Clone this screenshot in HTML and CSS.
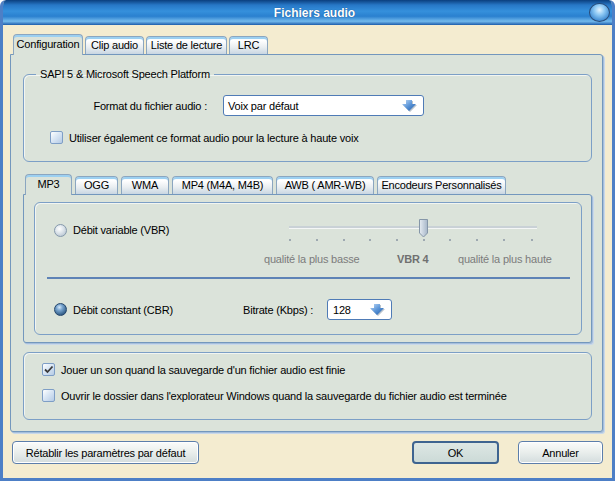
FILE: index.html
```html
<!DOCTYPE html>
<html lang="fr">
  <head>
    <meta charset="UTF-8" />
    <meta name="viewport" content="width=device-width, initial-scale=1.0" />
    <title>Fichiers audio</title>
    <link rel="stylesheet" href="styles.css">
  </head>
  <body>
    <div class="window">
      <!-- Title bar -->
      <div class="titlebar">
        <span class="title">Fichiers audio</span>
        <span class="title-ball"></span>
      </div>

      <div class="client">
        <!-- Main tabs -->
        <div class="tabbar main-tabs">
          <span class="tab active t-config">Configuration</span>
          <span class="tab t-clip">Clip audio</span>
          <span class="tab t-list">Liste de lecture</span>
          <span class="tab t-lrc">LRC</span>
        </div>

        <div class="panel main-panel">
          <fieldset class="group sapi">
            <legend>SAPI 5 &amp; Microsoft Speech Platform</legend>
            <div class="format-row">
              <span class="format-label">Format du fichier audio :</span>
              <div class="select format-select">
                <span>Voix par défaut</span>
                <svg class="arrow" width="18" height="14" viewBox="0 0 18 14">
                  <path d="M6 2H12V6H16L9 13L2 6H6Z" fill="#b9c3cc" />
                  <path d="M5 1H11V5H15L8 12L1 5H5Z" fill="url(#arr)" />
                  <defs>
                    <linearGradient id="arr" x1="0" y1="0" x2="1" y2="1">
                      <stop offset="0" stop-color="#c3dcf6" />
                      <stop offset="0.5" stop-color="#5b95d8" />
                      <stop offset="1" stop-color="#1f5aa8" />
                    </linearGradient>
                  </defs>
                </svg>
              </div>
            </div>
            <label class="check-row">
              <span class="checkbox"></span>
              <span>Utiliser également ce format audio pour la lecture à haute voix</span>
            </label>
          </fieldset>

          <!-- Encoder tabs -->
          <div class="tabbar enc-tabs">
            <span class="tab active t-mp3">MP3</span>
            <span class="tab t-ogg">OGG</span>
            <span class="tab t-wma">WMA</span>
            <span class="tab t-mp4">MP4 (M4A, M4B)</span>
            <span class="tab t-awb">AWB ( AMR-WB)</span>
            <span class="tab t-enc">Encodeurs Personnalisés</span>
          </div>

          <div class="panel enc-panel">
            <div class="group inner-group">
              <div class="vbr-row">
                <label class="option">
                  <span class="radio"></span>
                  <span>Débit variable (VBR)</span>
                </label>
                <svg class="slider" width="262" height="28" viewBox="0 0 262 28">
                  <rect x="5" y="7" width="248" height="3" fill="#c9d1d6" />
                  <rect x="5" y="9" width="248" height="1" fill="#f4f6f6" />
                  <g fill="#9ea9b1">
                    <rect x="5" y="20" width="2" height="2" />
                    <rect x="32" y="20" width="2" height="2" />
                    <rect x="59" y="20" width="2" height="2" />
                    <rect x="85" y="20" width="2" height="2" />
                    <rect x="112" y="20" width="2" height="2" />
                    <rect x="139" y="20" width="2" height="2" />
                    <rect x="165" y="20" width="2" height="2" />
                    <rect x="192" y="20" width="2" height="2" />
                    <rect x="219" y="20" width="2" height="2" />
                    <rect x="247" y="20" width="2" height="2" />
                  </g>
                  <path d="M135.5 0.5H143.5V14L139.5 18L135.5 14Z" fill="url(#thumb)" stroke="#8596a8" />
                  <defs>
                    <linearGradient id="thumb" x1="0" y1="0" x2="1" y2="0">
                      <stop offset="0" stop-color="#e6ecf2" />
                      <stop offset="1" stop-color="#a6b6c8" />
                    </linearGradient>
                  </defs>
                </svg>
              </div>
              <div class="scale-labels">
                <span>qualité la plus basse</span>
                <span class="vbr-value">VBR 4</span>
                <span>qualité la plus haute</span>
              </div>
              <div class="separator"></div>
              <div class="cbr-row">
                <label class="option">
                  <span class="radio checked"></span>
                  <span>Débit constant (CBR)</span>
                </label>
                <span class="bitrate-label">Bitrate (Kbps) :</span>
                <div class="select bitrate-select">
                  <span>128</span>
                  <svg class="arrow" width="18" height="14" viewBox="0 0 18 14">
                    <path d="M6 2H12V6H16L9 13L2 6H6Z" fill="#b9c3cc" />
                    <path d="M5 1H11V5H15L8 12L1 5H5Z" fill="url(#arr)" />
                  </svg>
                </div>
              </div>
            </div>
          </div>

          <div class="group save-group">
            <label class="check-row">
              <span class="checkbox checked">
                <svg width="11" height="11" viewBox="0 0 11 11">
                  <path d="M2 5.5L4.5 8L9.5 2.5" fill="none" stroke="#3a3a3a" stroke-width="1.8" />
                </svg>
              </span>
              <span>Jouer un son quand la sauvegarde d'un fichier audio est finie</span>
            </label>
            <label class="check-row">
              <span class="checkbox"></span>
              <span>Ouvrir le dossier dans l'explorateur Windows quand la sauvegarde du fichier audio est terminée</span>
            </label>
          </div>
        </div>

        <!-- Buttons -->
        <div class="footer">
          <button class="btn reset-btn">Rétablir les paramètres par défaut</button>
          <button class="btn ok-btn">OK</button>
          <button class="btn cancel-btn">Annuler</button>
        </div>
      </div>
    </div>
  </body>
</html>
```

FILE: styles.css
```css
body {
  margin: 0;
  padding: 0;
  font-family: "Liberation Sans", Arial, sans-serif;
  font-size: 11px;
  letter-spacing: -0.2px;
  color: #000;
}
.window {
  width: 615px;
  height: 481px;
  box-sizing: border-box;
  display: flex;
  flex-direction: column;
  background-color: #f4ecd0;
  border: 3px solid #4d7fc6;
  border-top: none;
  border-radius: 6px 6px 0 0;
  overflow: hidden;
}
.titlebar {
  height: 25px;
  margin: 0 -3px;
  display: flex;
  align-items: center;
  background: linear-gradient(#0b3f7e 0%, #2777c6 20%, #3590dc 45%, #2a80cf 65%, #72b9ec 85%, #1c5cab 100%);
  border-radius: 6px 6px 0 0;
}
.titlebar .title {
  flex: 1;
  padding-left: 40px;
  text-align: center;
  color: #fff;
  font-weight: bold;
  font-size: 12px;
  letter-spacing: 0;
  text-shadow: 0 0 1px #0b3f7e;
}
.title-ball {
  width: 19px;
  height: 17px;
  margin-right: 5px;
  border-radius: 50%;
  border: 1px solid #2a4c78;
  background: radial-gradient(circle at 50% 35%, #e3f3ff 0%, #8cc8f4 35%, #3f8ad2 75%, #1d5ca8 100%);
}
.client {
  flex: 1;
  display: flex;
  flex-direction: column;
  padding: 9px 9px 0 7px;
}

/* Tabs */
.tabbar {
  display: flex;
  align-items: flex-end;
  height: 20px;
  gap: 2px;
}
.main-tabs {
  padding-left: 3px;
}
.tab {
  position: relative;
  box-sizing: border-box;
  height: 18px;
  line-height: 17px;
  text-align: center;
  border: 1px solid #8ba6c0;
  border-bottom: none;
  border-radius: 4px 4px 0 0;
  background: linear-gradient(#eaf4fb 0%, #ffffff 20%, #e9eef1 60%, #c9d6e2 100%);
  box-shadow: inset 0 2px 0 #9cd0f1;
}
.tab.active {
  height: 21px;
  line-height: 19px;
  margin-bottom: -1px;
  z-index: 1;
  background: #dbe3da;
  box-shadow: inset 0 2px 0 #9cd0f1;
}
.t-config { width: 70px; }
.t-clip { width: 59px; }
.t-list { width: 81px; }
.t-lrc { width: 39px; }
.t-mp3 { width: 47px; }
.t-ogg { width: 43px; }
.t-wma { width: 48px; }
.t-mp4 { width: 101px; }
.t-awb { width: 98px; }
.t-enc { width: 129px; }
.panel {
  background-color: #dbe3da;
  border: 1px solid #7397bd;
  border-radius: 0 3px 3px 3px;
  box-shadow: 1px 1px 0 #a5bedb, 2px 2px 0 #c9d8ea;
}
.main-panel {
  height: 378px;
  box-sizing: border-box;
  padding: 13px 10px 0 12px;
  display: flex;
  flex-direction: column;
}
.group {
  margin: 0;
  border: 1px solid #7c9fc6;
  border-radius: 6px;
  box-shadow: 1px 1px 0 #f2f5f1 inset;
}
fieldset.group {
  padding: 0;
}
.group legend {
  margin-left: 12px;
  padding: 0 4px;
}
.sapi {
  height: 94px;
  box-sizing: border-box;
}
.format-row {
  display: flex;
  align-items: center;
  margin-top: 15px;
}
.format-label {
  width: 183px;
  text-align: right;
}
.select {
  box-sizing: border-box;
  height: 21px;
  display: flex;
  align-items: center;
  justify-content: space-between;
  padding: 0 4px 0 4px;
  background-color: #fff;
  border: 1px solid #4f7bb6;
  border-radius: 3px;
}
.format-select {
  width: 201px;
  margin-left: 16px;
}
.check-row {
  display: flex;
  align-items: center;
  gap: 6px;
}
.sapi .check-row {
  margin: 15px 0 0 26px;
}
.checkbox {
  width: 13px;
  height: 13px;
  box-sizing: border-box;
  display: flex;
  align-items: center;
  justify-content: center;
  border: 1px solid #7e9ec6;
  border-radius: 2px;
  background: linear-gradient(135deg, #ffffff 0%, #dde9f6 40%, #b5cbe5 100%);
}
.radio {
  width: 13px;
  height: 13px;
  box-sizing: border-box;
  border-radius: 50%;
  border: 1px solid #8599ac;
  background: radial-gradient(circle at 40% 35%, #ffffff 0%, #dfe6ec 40%, #aab9c8 100%);
}
.radio.checked {
  border-color: #23456b;
  background: radial-gradient(circle at 40% 30%, #d4e8fa 0%, #7aa6d0 30%, #3a6690 70%, #1d3d60 100%);
}
.option {
  display: flex;
  align-items: center;
  gap: 6px;
}

/* Encoder tabs */
.enc-tabs {
  margin-top: 12px;
  padding-left: 2px;
  gap: 3px;
}
.enc-panel {
  height: 149px;
  box-sizing: border-box;
  padding: 7px 9px 6px 10px;
}
.inner-group {
  height: 133px;
  box-sizing: border-box;
  padding: 12px 12px 0 12px;
}
.vbr-row {
  display: flex;
  align-items: center;
  height: 28px;
}
.vbr-row .option {
  width: 237px;
  padding-left: 7px;
  box-sizing: border-box;
  margin-top: 2px;
}
.slider {
  margin-top: 8px;
}
.scale-labels {
  display: grid;
  grid-template-columns: 133px 61px auto;
  padding-left: 217px;
  margin-top: 10px;
  color: #7c7c7c;
}
.vbr-value {
  font-weight: bold;
  color: #707070;
}
.separator {
  height: 2px;
  margin-top: 12px;
  width: 523px;
  background-color: #5e83b6;
}
.cbr-row {
  display: flex;
  align-items: center;
  margin-top: 20px;
}
.cbr-row .option {
  width: 196px;
  padding-left: 7px;
  box-sizing: border-box;
}
.bitrate-label {
  width: 84px;
}
.bitrate-select {
  width: 65px;
  padding-left: 5px;
}
.save-group {
  margin-top: 9px;
  height: 68px;
  box-sizing: border-box;
  padding: 10px 0 0 18px;
  display: flex;
  flex-direction: column;
  gap: 13px;
}

/* Footer buttons */
.footer {
  display: flex;
  align-items: center;
  margin-top: 9px;
  padding-left: 2px;
}
.btn {
  height: 23px;
  font-family: "Liberation Sans", Arial, sans-serif;
  font-size: 11px;
  letter-spacing: -0.2px;
  color: #000;
  border: 1px solid #5c7eab;
  border-radius: 4px;
  background: linear-gradient(#fbfcfb 0%, #e9eeec 50%, #d3dcdd 100%);
  box-shadow: inset 0 0 0 1px #ffffff;
  padding: 0;
}
.reset-btn {
  width: 187px;
}
.ok-btn {
  width: 87px;
  margin-left: auto;
  border: 2px solid #3e6490;
  background: linear-gradient(#dde7e4 0%, #ccdad7 100%);
  box-shadow: none;
}
.cancel-btn {
  width: 85px;
  margin-left: 19px;
}
```
